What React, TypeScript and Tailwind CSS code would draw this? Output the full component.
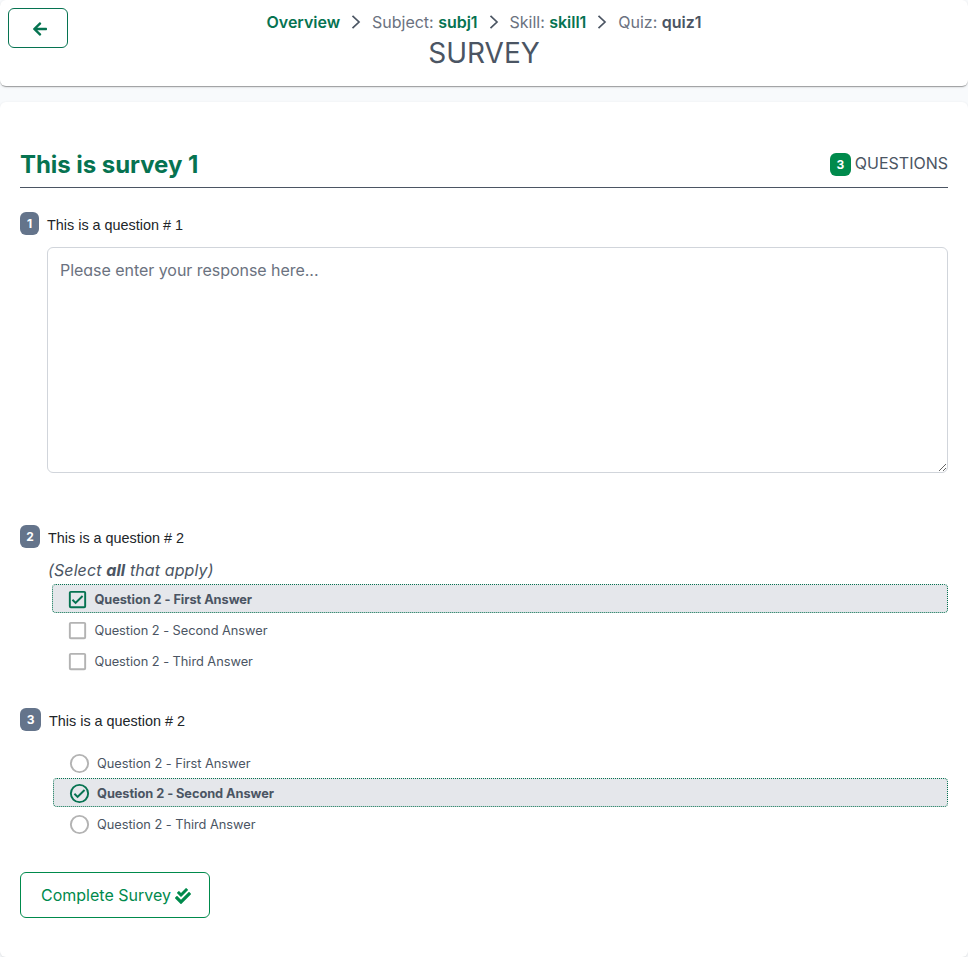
import React from 'react';
import { FaArrowLeft, FaCheckDouble } from 'react-icons/fa';

const BOX = 'M19 3H5c-1.11 0-2 .89-2 2v14a2 2 0 0 0 2 2h14a2 2 0 0 0 2-2V5a2 2 0 0 0-2-2m0 2v14H5V5h14z';
const BOX_CHECKED = BOX + 'M10 17l-4-4 1.41-1.41L10 14.17l6.59-6.59L18 9z';
const CIRCLE = 'M12 20a8 8 0 0 1-8-8 8 8 0 0 1 8-8 8 8 0 0 1 8 8 8 8 0 0 1-8 8m0-18A10 10 0 0 0 2 12a10 10 0 0 0 10 10 10 10 0 0 0 10-10A10 10 0 0 0 12 2z';
const CIRCLE_CHECKED = CIRCLE + 'M16.59 7.58L10 14.17l-2.59-2.58L6 13l4 4 8-8z';

function Icon({ d, className }: { d: string; className: string }) {
  return (
    <svg viewBox="0 0 24 24" fill="currentColor" className={className}>
      <path d={d} />
    </svg>
  );
}

function Separator() {
  return (
    <svg viewBox="0 0 10 14" className="mx-[11px] h-[14px] w-[10px] text-[#4b5563]" fill="none" stroke="currentColor" strokeWidth="1.7">
      <path d="M1.5 0.8 8 7 1.5 13.2" />
    </svg>
  );
}

function Crumb({ label, value, current = false }: { label?: string; value: string; current?: boolean }) {
  return (
    <span className="whitespace-pre text-[#6b7280]">
      {label ? label + ' ' : ''}
      <span className={`font-semibold ${current ? 'text-[#4b5563]' : 'text-[#067351]'}`}>{value}</span>
    </span>
  );
}

function NumberBadge({ n, width }: { n: number; width: string }) {
  return (
    <span className={`flex h-[23px] shrink-0 items-center justify-center rounded-[6px] bg-[#64748b] text-xs font-bold text-white ${width}`}>{n}</span>
  );
}

function QuestionText({ children }: { children: string }) {
  return <p className="pt-1 font-['Liberation_Sans',sans-serif] text-[14.4px] leading-[18px] text-[#212529]">{children}</p>;
}

function Option({ text, selected = false, round = false, height }: { text: string; selected?: boolean; round?: boolean; height: string }) {
  const d = round ? (selected ? CIRCLE_CHECKED : CIRCLE) : selected ? BOX_CHECKED : BOX;
  return (
    <div className={`flex items-center rounded-[4px] border border-dotted ${height} ${round ? 'pl-[14px]' : 'pl-[13px]'} ${selected ? 'border-[#067351] bg-[#e5e7eb]' : 'border-transparent'}`}>
      <Icon d={d} className={`size-[23px] ${selected ? 'text-[#067351]' : 'text-[#b3b3b3]'}`} />
      <span className={`text-[12.8px] leading-[19px] ${round ? 'ml-[6px]' : 'ml-[5.4px]'} ${selected ? 'font-bold tracking-[-0.06px]' : 'tracking-[-0.03px]'}`}>{text}</span>
    </div>
  );
}

export default function App() {
  return (
    <div className="h-[957px] overflow-hidden bg-[#f8fafc] font-['Inter',sans-serif] text-base text-[#4b5563]">
      <header className="flex h-[86px] rounded-[6px] bg-white px-2 pt-2 shadow-[0_2px_1px_-1px_rgba(0,0,0,0.2),0_1px_1px_0_rgba(0,0,0,0.14),0_1px_3px_0_rgba(0,0,0,0.12)]">
        <button className="flex h-10 w-[60px] items-center justify-center rounded-[6px] border border-[#067351] pt-[2px] pl-1 text-[#067351]">
          <FaArrowLeft className="size-4" />
        </button>
        <div className="flex flex-1 flex-col items-center pr-[60px]">
          <nav className="flex h-7 items-center tracking-[-0.02px]">
            <Crumb value="Overview" />
            <Separator />
            <Crumb label="Subject:" value="subj1" />
            <Separator />
            <Crumb label="Skill:" value="skill1" />
            <Separator />
            <Crumb label="Quiz:" value="quiz1" current />
          </nav>
          <h1 className="text-[28px] leading-[34px]">SURVEY</h1>
        </div>
      </header>

      <main className="mt-4 h-[855px] rounded-[6px] bg-white px-5 pt-12 shadow-[0_1px_3px_0_rgba(0,0,0,0.12)]">
        <div className="flex h-[38px] items-start justify-between border-b border-[#4b5563]">
          <h2 className="text-2xl leading-[30px] font-bold tracking-[-0.05px] text-[#067351]">This is survey 1</h2>
          <div className="flex items-start gap-1 pt-px leading-6">
            <span className="mt-[2px] flex h-[23px] w-[21px] items-center justify-center rounded-[6px] bg-[#008a4c] text-xs font-bold text-white">3</span>
            <span>QUESTIONS</span>
          </div>
        </div>

        <section className="mt-6 flex h-[313px] gap-2">
          <NumberBadge n={1} width="w-[19px]" />
          <div className="flex-1">
            <QuestionText>This is a question # 1</QuestionText>
            <textarea
              placeholder="Please enter your response here..."
              className="mt-[13px] block h-[226px] w-full rounded-[6px] border border-[#d1d5db] px-3 py-[10px] leading-6 tracking-[-0.04px] [font-feature-settings:'cv11'] placeholder:text-[#6b7280]"
            />
          </div>
        </section>

        <section className="flex h-[183px] gap-2">
          <NumberBadge n={2} width="w-[20px]" />
          <div className="flex-1">
            <QuestionText>This is a question # 2</QuestionText>
            <p className="mt-[11px] leading-6 tracking-[0.11px] italic">(Select <b className="font-bold">all</b> that apply)</p>
            <div className="mt-[2px] ml-1">
              <Option height="h-[29px] pt-[2px]" text="Question 2 - First Answer" selected />
              <Option height="mt-[2px] h-[29px] pt-[2px]" text="Question 2 - Second Answer" />
              <Option height="mt-[2px] h-[29px] pt-[2px]" text="Question 2 - Third Answer" />
            </div>
          </div>
        </section>

        <section className="flex h-[164px] gap-2">
          <NumberBadge n={3} width="w-[21px]" />
          <div className="flex-1">
            <QuestionText>This is a question # 2</QuestionText>
            <div className="mt-[18px] ml-1">
              <Option height="h-[30px]" text="Question 2 - First Answer" round />
              <Option height="h-[29px] pt-[2px]" text="Question 2 - Second Answer" selected round />
              <Option height="mt-[2px] h-[29px] pt-[2px]" text="Question 2 - Third Answer" round />
            </div>
          </div>
        </section>

        <button className="flex h-[46px] w-[190px] items-center gap-1 rounded-[6px] border border-[#008a4c] pl-5 text-[#008a4c]">
          Complete Survey
          <FaCheckDouble className="mt-[2px] size-4" />
        </button>
      </main>
    </div>
  );
}
